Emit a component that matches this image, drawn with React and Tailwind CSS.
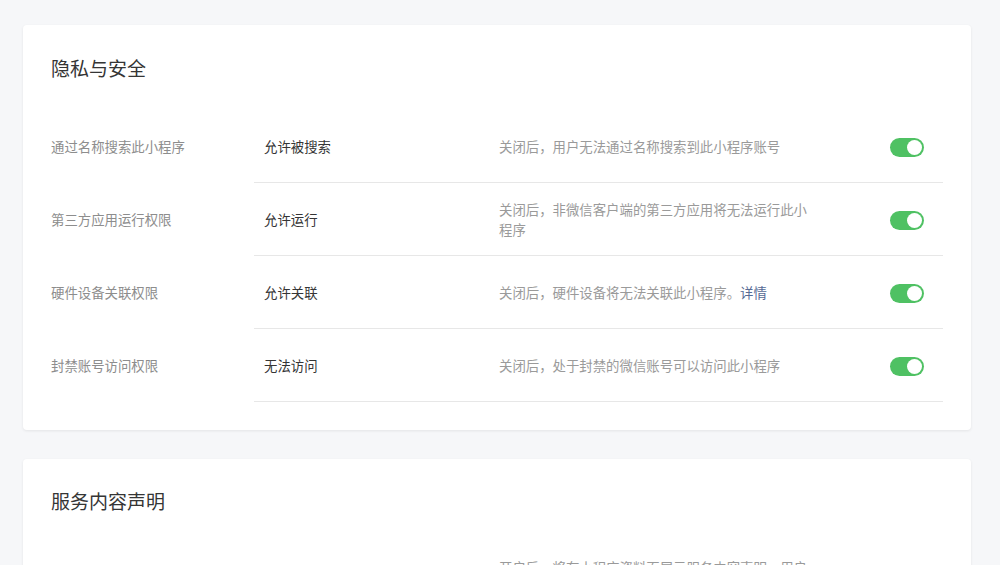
import React from "react";

const font = { fontFamily: '"Noto Sans CJK SC", "Noto Sans", sans-serif' };

function Toggle() {
  return (
    <div className="relative w-[34px] h-[19px] rounded-full bg-[#4fc163] mt-[2px]">
      <div className="absolute right-[2px] top-[2px] w-[15px] h-[15px] rounded-full bg-white" />
    </div>
  );
}

function Row({ label, value, desc }) {
  return (
    <div className="flex">
      <div className="w-[203px] shrink-0 flex items-center text-[13.4px] text-[#8d8d8d]">{label}</div>
      <div className="flex-1 flex items-center min-h-[73px] border-b border-[#e7e7e7] pl-[10px] pr-[19px]">
        <div className="w-[235px] shrink-0 text-[13.4px] text-[#353535]">{value}</div>
        <div className="flex-1 text-[13.4px] leading-[20px] text-[#9a9a9a]">
          <div className="max-w-[312px]">{desc}</div>
        </div>
        <Toggle />
      </div>
    </div>
  );
}

export default function App() {
  return (
    <div style={font} className="min-h-[565px] h-[565px] overflow-hidden bg-[#f6f7f9] px-[23px] pt-[25px]">
      <div className="w-[948px] bg-white rounded-[4px] shadow-[0_1px_3px_rgba(0,0,0,0.08)] pl-[28px] pr-[28px] pt-[29px] pb-[28px]">
        <div className="text-[19px] leading-[28px] text-[#353535]">隐私与安全</div>
        <div className="mt-[28px]">
          <Row label="通过名称搜索此小程序" value="允许被搜索" desc="关闭后，用户无法通过名称搜索到此小程序账号" />
          <Row label="第三方应用运行权限" value="允许运行" desc="关闭后，非微信客户端的第三方应用将无法运行此小程序" />
          <Row
            label="硬件设备关联权限"
            value="允许关联"
            desc={<>关闭后，硬件设备将无法关联此小程序。<span className="text-[#576b95]">详情</span></>}
          />
          <Row label="封禁账号访问权限" value="无法访问" desc="关闭后，处于封禁的微信账号可以访问此小程序" />
        </div>
      </div>
      <div className="mt-[29px] w-[948px] bg-white rounded-[4px] shadow-[0_1px_3px_rgba(0,0,0,0.08)] pl-[28px] pr-[28px] pt-[28px] pb-[29px]">
        <div className="text-[19px] leading-[28px] text-[#353535]">服务内容声明</div>
        <div className="mt-[26px]">
          <Row label="" value="" desc="开启后，将在小程序资料页展示服务内容声明，用户可查看相关说明信息" />
        </div>
      </div>
    </div>
  );
}
